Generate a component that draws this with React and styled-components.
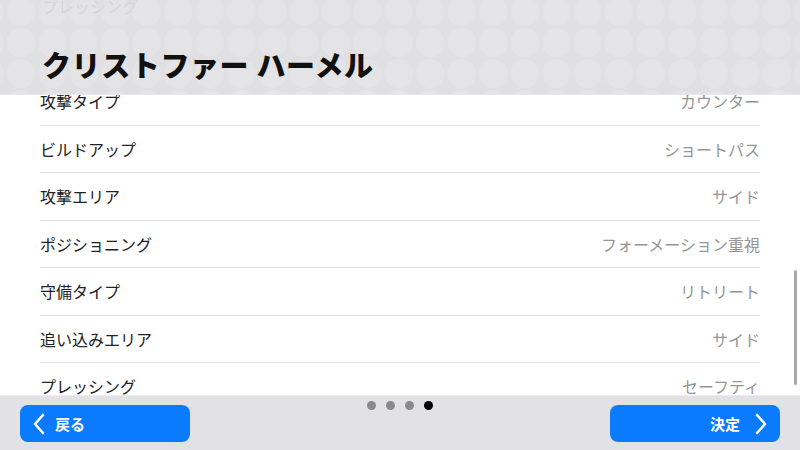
import styled, { createGlobalStyle } from "styled-components";

const GlobalStyle = createGlobalStyle`
  html, body {
    margin: 0;
    padding: 0;
    background: #ffffff;
  }
  body {
    font-family: "Noto Sans CJK JP", "Noto Sans", sans-serif;
  }
`;

const rows = [
  { name: "攻撃タイプ", value: "カウンター" },
  { name: "ビルドアップ", value: "ショートパス" },
  { name: "攻撃エリア", value: "サイド" },
  { name: "ポジショニング", value: "フォーメーション重視" },
  { name: "守備タイプ", value: "リトリート" },
  { name: "追い込みエリア", value: "サイド" },
  { name: "プレッシング", value: "セーフティ" },
];

const Chevron = ({ dir }) => (
  <svg width="14" height="22" viewBox="0 0 14 22" fill="none">
    <path
      d={dir === "left" ? "M11 2 L3 11 L11 20" : "M3 2 L11 11 L3 20"}
      stroke="#ffffff"
      strokeWidth="2.6"
      strokeLinecap="round"
      strokeLinejoin="round"
    />
  </svg>
);

const App = () => {
  return (
    <Screen>
      <GlobalStyle />
      <Header>
        <Ghost>プレッシング</Ghost>
        <Title>クリストファー ハーメル</Title>
      </Header>
      <ListArea>
        <List>
          {rows.map((row) => (
            <Row key={row.name}>
              <Name>{row.name}</Name>
              <Value>{row.value}</Value>
            </Row>
          ))}
        </List>
        <ScrollBar />
      </ListArea>
      <Footer>
        <BlueButton>
          <Chevron dir="left" />
          <span>戻る</span>
        </BlueButton>
        <Dots>
          {[0, 1, 2, 3].map((i) => (
            <Dot key={i} active={i === 3} />
          ))}
        </Dots>
        <BlueButton right>
          <span>決定</span>
          <Chevron dir="right" />
        </BlueButton>
      </Footer>
    </Screen>
  );
};

const Screen = styled.div`
  width: 800px;
  height: 450px;
  display: flex;
  flex-direction: column;
  overflow: hidden;
  background: #ffffff;
`;

const Header = styled.div`
  height: 95px;
  flex-shrink: 0;
  box-sizing: border-box;
  padding-left: 42px;
  display: flex;
  flex-direction: column;
  background-color: #e0e0e2;
  background-image: radial-gradient(
    circle at center,
    rgba(255, 255, 255, 0.13) 0,
    rgba(255, 255, 255, 0.13) 14px,
    transparent 15px
  );
  background-size: 31.5px 31px;
  background-position: 5px -4px;
  border-bottom: 1px solid #e9e9eb;
  position: relative;
  z-index: 1;
`;

const Ghost = styled.div`
  font-size: 16px;
  line-height: 16px;
  margin-top: -2px;
  color: #d6d6d8;
`;

const Title = styled.div`
  margin-top: 33px;
  font-size: 29px;
  line-height: 34px;
  font-weight: 900;
  color: #111111;
  letter-spacing: 0.6px;
`;

const ListArea = styled.div`
  flex: 1;
  position: relative;
  overflow: hidden;
`;

const List = styled.div`
  margin-top: -17px;
  padding: 0 40px;
  display: flex;
  flex-direction: column;
`;

const Row = styled.div`
  height: 47.5px;
  box-sizing: border-box;
  display: flex;
  align-items: center;
  justify-content: space-between;
  border-bottom: 1px solid #e0e0e0;
  font-size: 16px;
`;

const Name = styled.span`
  color: #222222;
`;

const Value = styled.span`
  color: #959595;
`;

const ScrollBar = styled.div`
  position: absolute;
  right: 3px;
  top: 175px;
  width: 3px;
  height: 115px;
  border-radius: 2px;
  background: #a9a9a9;
`;

const Footer = styled.div`
  height: 55px;
  flex-shrink: 0;
  box-sizing: border-box;
  background: #e2e2e4;
  border-top: 1px solid #ececee;
  padding: 9px 20px 8px;
  display: flex;
  align-items: flex-start;
  justify-content: space-between;
`;

const BlueButton = styled.div`
  width: 170px;
  height: 37px;
  border-radius: 8px;
  background: #0a7bff;
  color: #ffffff;
  font-size: 15px;
  font-weight: 700;
  display: flex;
  align-items: center;
  justify-content: ${(p) => (p.right ? "flex-end" : "flex-start")};
  gap: ${(p) => (p.right ? "14px" : "9px")};
  box-sizing: border-box;
  padding: ${(p) => (p.right ? "0 12px 0 0" : "0 0 0 12px")};
`;

const Dots = styled.div`
  display: flex;
  gap: 10px;
  margin-top: -4px;
`;

const Dot = styled.div`
  width: 9px;
  height: 9px;
  border-radius: 50%;
  background: ${(p) => (p.active ? "#000000" : "#8a8a8a")};
`;

export default App;
